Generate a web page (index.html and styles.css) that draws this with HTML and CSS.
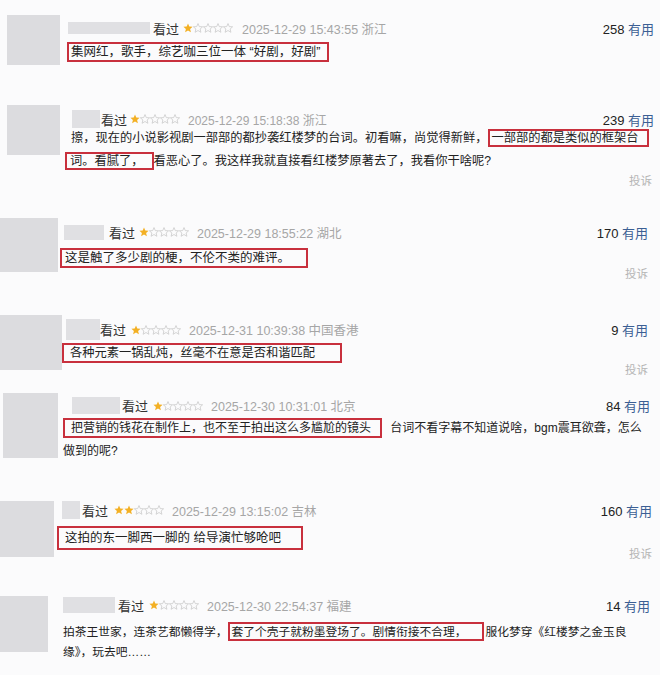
FILE: index.html
```html
<!DOCTYPE html>
<html lang="zh-CN">

<head>
    <meta charset="UTF-8">
    <title>短评</title>
    <link rel="stylesheet" href="styles.css">
</head>

<body>

    <svg width="0" height="0" class="defs">
        <defs>
            <polygon id="star" points="5,0.6 6.3,3.6 9.6,3.8 7.1,6 7.9,9.3 5,7.5 2.1,9.3 2.9,6 0.4,3.8 3.7,3.6"/>
        </defs>
    </svg>

    <div class="review r1">
        <div class="avatar"></div>
        <div class="main">
            <div class="head">
                <span class="name"></span>
                <span class="seen">看过</span>
                <span class="stars"><svg class="on"><use href="#star"/></svg><svg><use href="#star"/></svg><svg><use href="#star"/></svg><svg><use href="#star"/></svg><svg><use href="#star"/></svg></span>
                <span class="time">2025-12-29 15:43:55 浙江</span>
                <span class="votes"><b>258</b> 有用</span>
            </div>
            <p class="text"><span class="mark">集网红，歌手，综艺咖三位一体 “好剧，好剧”</span></p>
        </div>
    </div>

    <div class="review r2">
        <div class="avatar"></div>
        <div class="main">
            <div class="head">
                <span class="name"></span>
                <span class="seen">看过</span>
                <span class="stars"><svg class="on"><use href="#star"/></svg><svg><use href="#star"/></svg><svg><use href="#star"/></svg><svg><use href="#star"/></svg><svg><use href="#star"/></svg></span>
                <span class="time">2025-12-29 15:18:38 浙江</span>
                <span class="votes"><b>239</b> 有用</span>
            </div>
            <p class="text">擦，现在的小说影视剧一部部的都抄袭红楼梦的台词。初看嘛，尚觉得新鲜，<span class="mark">一部部的都是类似的框架台</span><br><span class="mark lead">词。看腻了，</span>看恶心了。我这样我就直接看红楼梦原著去了，我看你干啥呢?</p>
            <div class="report">投诉</div>
        </div>
    </div>

    <div class="review r3">
        <div class="avatar"></div>
        <div class="main">
            <div class="head">
                <span class="name"></span>
                <span class="seen">看过</span>
                <span class="stars"><svg class="on"><use href="#star"/></svg><svg><use href="#star"/></svg><svg><use href="#star"/></svg><svg><use href="#star"/></svg><svg><use href="#star"/></svg></span>
                <span class="time">2025-12-29 18:55:22 湖北</span>
                <span class="votes"><b>170</b> 有用</span>
            </div>
            <p class="text"><span class="mark">这是触了多少剧的梗，不伦不类的难评。</span></p>
            <div class="report">投诉</div>
        </div>
    </div>

    <div class="review r4">
        <div class="avatar"></div>
        <div class="main">
            <div class="head">
                <span class="name"></span>
                <span class="seen">看过</span>
                <span class="stars"><svg class="on"><use href="#star"/></svg><svg><use href="#star"/></svg><svg><use href="#star"/></svg><svg><use href="#star"/></svg><svg><use href="#star"/></svg></span>
                <span class="time">2025-12-31 10:39:38 中国香港</span>
                <span class="votes"><b>9</b> 有用</span>
            </div>
            <p class="text"><span class="mark">各种元素一锅乱炖，丝毫不在意是否和谐匹配</span></p>
            <div class="report">投诉</div>
        </div>
    </div>

    <div class="review r5">
        <div class="avatar"></div>
        <div class="main">
            <div class="head">
                <span class="name"></span>
                <span class="seen">看过</span>
                <span class="stars"><svg class="on"><use href="#star"/></svg><svg><use href="#star"/></svg><svg><use href="#star"/></svg><svg><use href="#star"/></svg><svg><use href="#star"/></svg></span>
                <span class="time">2025-12-30 10:31:01 北京</span>
                <span class="votes"><b>84</b> 有用</span>
            </div>
            <p class="text"><span class="mark">把营销的钱花在制作上，也不至于拍出这么多尴尬的镜头</span> 台词不看字幕不知道说啥，bgm震耳欲聋，怎么<br>做到的呢?</p>
        </div>
    </div>

    <div class="review r6">
        <div class="avatar"></div>
        <div class="main">
            <div class="head">
                <span class="name"></span>
                <span class="seen">看过</span>
                <span class="stars"><svg class="on"><use href="#star"/></svg><svg class="on"><use href="#star"/></svg><svg><use href="#star"/></svg><svg><use href="#star"/></svg><svg><use href="#star"/></svg></span>
                <span class="time">2025-12-29 13:15:02 吉林</span>
                <span class="votes"><b>160</b> 有用</span>
            </div>
            <p class="text"><span class="mark">这拍的东一脚西一脚的 给导演忙够呛吧</span></p>
            <div class="report">投诉</div>
        </div>
    </div>

    <div class="review r7">
        <div class="avatar"></div>
        <div class="main">
            <div class="head">
                <span class="name"></span>
                <span class="seen">看过</span>
                <span class="stars"><svg class="on"><use href="#star"/></svg><svg><use href="#star"/></svg><svg><use href="#star"/></svg><svg><use href="#star"/></svg><svg><use href="#star"/></svg></span>
                <span class="time">2025-12-30 22:54:37 福建</span>
                <span class="votes"><b>14</b> 有用</span>
            </div>
            <p class="text">拍茶王世家，连茶艺都懒得学，<span class="mark">套了个壳子就粉墨登场了。剧情衔接不合理，</span>服化梦穿《红楼梦之金玉良<br>缘》，玩去吧……</p>
        </div>
    </div>

</body>

</html>
```

FILE: styles.css
```css
body {
    margin: 0;
    background-color: #fbfbfc;
    font-family: "Liberation Sans", "Noto Sans CJK SC", sans-serif;
    color: #222;
    overflow: hidden;
}

.defs {
    position: absolute;
}

/* one comment row */
.review {
    display: flex;
    align-items: flex-start;
    box-sizing: border-box;
    overflow: hidden;
}

.avatar {
    flex: none;
    background-color: #dcdcdf;
}

.main {
    flex: 1;
    min-width: 0;
}

.head {
    display: flex;
    align-items: center;
    height: 16px;
    white-space: nowrap;
}

.name {
    flex: none;
    background-color: #e0e0e3;
}

.seen {
    font-family: "Noto Sans CJK SC", sans-serif;
    font-size: 13px;
    color: #333;
}

.stars {
    display: flex;
}

.stars svg {
    width: 10px;
    height: 10px;
    fill: none;
    stroke: #cacaca;
    stroke-width: 0.8;
}

.stars svg.on {
    fill: #f3b024;
    stroke: none;
}

.time {
    font-size: 12.5px;
    color: #a6a6a6;
}

.votes {
    margin-left: auto;
    font-size: 13px;
    color: #3b5f94;
}

.votes b {
    font-weight: normal;
    color: #222;
}

.text {
    margin: 0;
    font-family: "Liberation Sans", "Noto Sans CJK SC", sans-serif;
    font-size: 12px;
    line-height: 22px;
    color: #222;
}

.mark {
    border: 2px solid #c8303d;
    padding: 0 4px;
}

.report {
    text-align: right;
    font-family: "Noto Sans CJK SC", sans-serif;
    font-size: 11.5px;
    color: #b5b5b5;
}

/* row 1 */
.r1 { height: 95px; padding: 15px 6px 0 7px; }
.r1 .avatar { width: 53px; height: 50px; }
.r1 .main { margin-left: 7px; }
.r1 .head { margin-top: 5px; }
.r1 .name { width: 82px; height: 12px; margin-left: 1px; }
.r1 .seen { margin-left: 3px; }
.r1 .stars { margin-left: 4px; }
.r1 .time { margin-left: 9px; }
.r1 .text { margin-top: 6px; font-size: 12.5px; line-height: 20px; }
.r1 .mark { padding: 1px 7px 1px 2px; }

/* row 2 */
.r2 { height: 100px; padding: 10px 6px 0 7px; }
.r2 .avatar { width: 53px; height: 50px; }
.r2 .main { margin-left: 11px; }
.r2 .head { margin-top: 6px; }
.r2 .name { width: 28px; height: 18px; margin-left: 1px; }
.r2 .seen { margin-left: 1px; }
.r2 .stars { margin-left: 3px; }
.r2 .time { margin-left: 8px; font-size: 12px; }
.r2 .text { margin-top: 0; font-size: 12.25px; line-height: 23px; }
.r2 .mark { padding: 0 8px 0 2px; }
.r2 .mark.lead { margin-left: -6px; padding-left: 3px; }
.r2 .report { margin-top: -1px; margin-right: 2px; }

/* row 3 */
.r3 { height: 105px; padding: 23px 12px 0 0; }
.r3 .avatar { width: 58px; height: 54px; }
.r3 .main { margin-left: 2px; }
.r3 .head { margin-top: 6px; }
.r3 .name { width: 40px; height: 15px; margin-left: 4px; }
.r3 .seen { margin-left: 5px; }
.r3 .stars { margin-left: 4px; }
.r3 .time { margin-left: 8px; }
.r3 .text { margin-top: 7px; font-size: 12.5px; }
.r3 .mark { padding: 1px 16px 1px 3px; }
.r3 .report { margin-top: -4px; }

/* row 4 */
.r4 { height: 85px; padding: 15px 12px 0 0; }
.r4 .avatar { width: 62px; height: 55px; }
.r4 .head { margin-top: 4px; height: 21px; }
.r4 .name { width: 34px; height: 21px; margin-left: 4px; }
.r4 .stars { margin-left: 5px; }
.r4 .time { margin-left: 8px; }
.r4 .text { margin-top: 2px; font-size: 12.25px; }
.r4 .mark { padding: 1px 25px 1px 6px; }
.r4 .report { margin-top: -3px; }

/* row 5 */
.r5 { height: 100px; padding: 8px 10px 0 3px; }
.r5 .avatar { width: 55px; height: 65px; }
.r5 .main { margin-left: 5px; }
.r5 .head { margin-top: 4px; height: 17px; }
.r5 .name { width: 48px; height: 17px; margin-left: 9px; }
.r5 .seen { margin-left: 2px; }
.r5 .stars { margin-left: 5px; }
.r5 .time { margin-left: 8px; }
.r5 .text { margin-top: 3px; line-height: 23px; }
.r5 .mark { padding: 1px 9px 1px 6px; margin-right: 5px; }

/* row 6 */
.r6 { height: 95px; padding: 16px 8px 0 0; }
.r6 .avatar { width: 54px; height: 56px; }
.r6 .main { margin-left: 3px; }
.r6 .head { margin-top: 0; height: 18px; }
.r6 .name { width: 18px; height: 18px; margin-left: 5px; }
.r6 .seen { margin-left: 2px; }
.r6 .stars { margin-left: 6px; }
.r6 .time { margin-left: 8px; }
.r6 .text { margin-top: 8px; font-size: 12.5px; }
.r6 .mark { padding: 3px 20px 3px 6px; }
.r6 .report { margin-top: -4px; }

/* row 7 */
.r7 { height: 95px; padding: 16px 10px 0 0; }
.r7 .avatar { width: 48px; height: 56px; }
.r7 .main { margin-left: 15px; }
.r7 .head { margin-top: 1px; }
.r7 .name { width: 52px; height: 16px; }
.r7 .seen { margin-left: 3px; }
.r7 .stars { margin-left: 5px; }
.r7 .time { margin-left: 8px; }
.r7 .text { margin-top: 9px; font-size: 11.75px; line-height: 20px; }
.r7 .mark { padding: 1px 15px 1px 2px; margin-right: 2px; }
```
